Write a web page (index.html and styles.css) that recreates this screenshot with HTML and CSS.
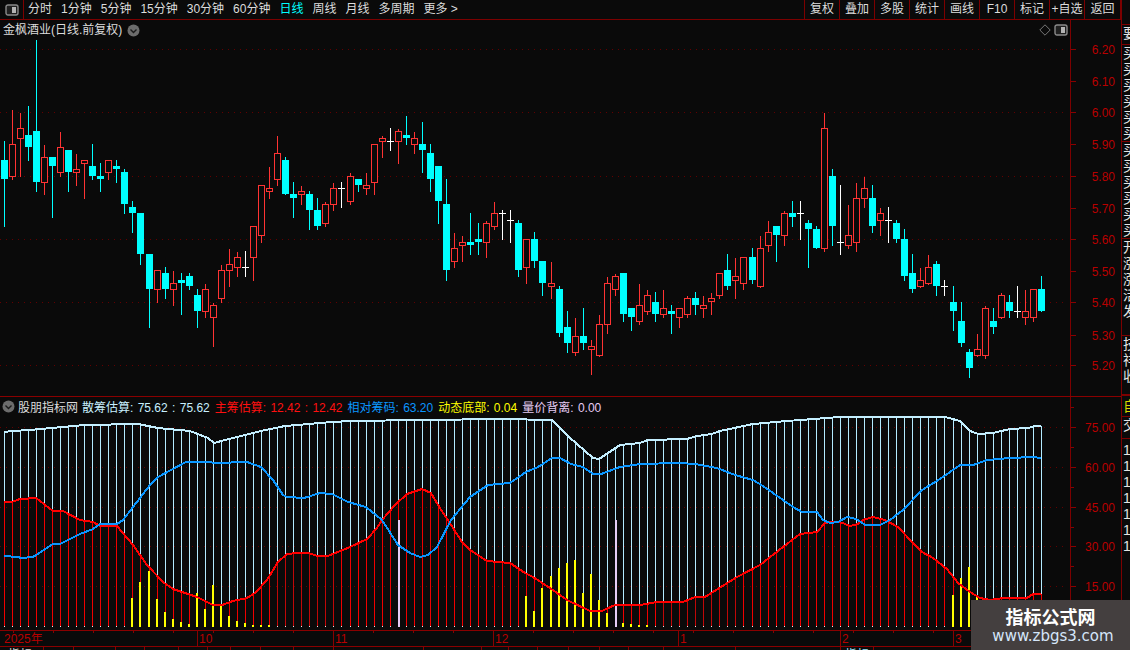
FILE: index.html
```html
<!DOCTYPE html>
<html lang="zh">
<head>
<meta charset="utf-8">
<title>金枫酒业</title>
<link rel="stylesheet" href="styles.css">
</head>
<body>
<div class="app">
  <div class="main">
    <div class="toolbar">
      <div class="tool-icon">
        <svg width="14" height="12" viewBox="0 0 14 12"><rect x="1" y="1" width="12" height="10" rx="2" class="ico-frame"/><rect x="7" y="3" width="4" height="6" class="ico-fill"/></svg>
      </div>
      <nav class="periods">
        <span>分时</span><span>1分钟</span><span>5分钟</span><span>15分钟</span><span>30分钟</span><span>60分钟</span><span class="active">日线</span><span>周线</span><span>月线</span><span>多周期</span><span>更多 &gt;</span>
      </nav>
      <nav class="actions">
        <span>复权</span><span>叠加</span><span>多股</span><span>统计</span><span>画线</span><span>F10</span><span>标记</span><span>+自选</span><span>返回</span>
      </nav>
    </div>

    <section class="pane pane-price">
      <div class="plot-col">
        <div class="title-row">
          <span class="stock">金枫酒业(日线.前复权)</span>
          <svg class="chev" width="13" height="13" viewBox="0 0 13 13"><circle cx="6.5" cy="6.5" r="6" class="chev-bg"/><path d="M3.5 5.5 6.5 8.5 9.5 5.5" class="chev-line"/></svg>
          <span class="title-tools">
            <svg width="12" height="12" viewBox="0 0 12 12"><path d="M6 .8 11.2 6 6 11.2 .8 6Z" class="ico-diamond"/></svg>
            <svg width="14" height="12" viewBox="0 0 14 12"><rect x="1" y="1" width="12" height="10" rx="2" class="ico-frame"/><rect x="7" y="3" width="4" height="6" class="ico-fill"/></svg>
          </span>
        </div>
        <svg id="price" class="plot" width="1070" height="356" viewBox="0 40 1070 356"></svg>
      </div>
      <svg id="price-axis" class="axis" width="50" height="376" viewBox="1071 20 50 376"></svg>
    </section>

    <section class="pane pane-ind">
      <div class="plot-col">
        <div class="legend">
          <svg class="chev" width="13" height="13" viewBox="0 0 13 13"><circle cx="6.5" cy="6.5" r="6" class="chev-bg"/><path d="M3.5 5.5 6.5 8.5 9.5 5.5" class="chev-line"/></svg>
          <span class="l-name">股朋指标网</span>
          <span class="l-san">散筹估算: 75.62 : 75.62</span>
          <span class="l-zhu">主筹估算: 12.42 : 12.42</span>
          <span class="l-xd">相对筹码: 63.20</span>
          <span class="l-dt">动态底部: 0.04</span>
          <span class="l-lj">量价背离: 0.00</span>
        </div>
        <svg id="ind" class="plot" width="1070" height="215" viewBox="0 415 1070 215"></svg>
      </div>
      <svg id="ind-axis" class="axis" width="50" height="233" viewBox="1071 397 50 233"></svg>
    </section>

    <svg id="dates" class="dates" width="1121" height="17" viewBox="0 630 1121 17"></svg>
    <svg id="strip" class="strip" width="1121" height="3" viewBox="0 647 1121 3"></svg>
  </div>

  <aside class="side">
    <div class="cell c-blank"></div>
    <div class="cell c-1"><p>要</p></div>
    <div class="cell c-2"><p>买买买买买买</p></div>
    <div class="cell c-2"><p>买买买买买买</p></div>
    <div class="cell c-2"><p>开涨涨活发</p></div>
    <div class="cell c-3"><p>技祥收</p></div>
    <div class="cell c-4"><p class="yellow">自</p></div>
    <div class="cell c-5"><p>交</p></div>
    <div class="cell c-6"><p>111111111111</p></div>
  </aside>

  <div class="watermark">
    <strong>指标公式网</strong>
    <em>www.zbgs3.com</em>
  </div>
</div>
<script src="chart.js"></script>
</body>
</html>
```
FILE: styles.css
```css
* { box-sizing: border-box; }
html, body { margin: 0; padding: 0; background: #0a0a0a; }
body { font-family: "Liberation Sans", "Noto Sans CJK SC", sans-serif; font-size: 12px; color: #dcdcdc; }

.app { position: relative; width: 1130px; height: 650px; display: flex; overflow: hidden; background: #0a0a0a; }
.main { width: 1121px; display: flex; flex-direction: column; }

.toolbar { height: 20px; display: flex; align-items: stretch; border-bottom: 1px solid #7c0000; flex: none; }
.tool-icon { width: 24px; border-right: 1px solid #7c0000; display: flex; align-items: center; justify-content: center; }
.periods { display: flex; align-items: center; gap: 9px; padding-left: 4px; flex: 1; }
.periods span { line-height: 19px; white-space: nowrap; }
.periods .active { color: #00ffff; }
.actions { display: flex; border-left: 1px solid #7c0000; }
.actions span { width: 35px; border-right: 1px solid #7c0000; text-align: center; line-height: 19px; white-space: nowrap; }
.actions span:last-child { width: 36px; }

.ico-frame { fill: #202020; stroke: #8a8a8a; stroke-width: 1.4; }
.ico-fill { fill: #b4b4b4; }
.ico-diamond { fill: none; stroke: #777; stroke-width: 1; }
.chev-bg { fill: #6c6c6c; }
.chev-line { fill: none; stroke: #1a1a1a; stroke-width: 1.4; }

.pane { display: flex; flex: none; }
.pane-price { height: 376px; }
.pane-ind { height: 234px; border-top: 1px solid #8a0000; }
.plot-col { width: 1070px; display: flex; flex-direction: column; }
.plot { display: block; flex: none; }
.axis { display: block; border-left: 1px solid #7c0000; width: 51px; flex: none; }

.title-row { height: 20px; display: flex; align-items: center; padding-left: 3px; flex: none; }
.stock { font-size: 12px; line-height: 20px; white-space: nowrap; }
.chev { margin-left: 5px; flex: none; }
.title-tools { margin-left: auto; margin-right: 2px; display: flex; gap: 3px; align-items: center; }

.legend { height: 18px; display: flex; align-items: center; padding-left: 2px; white-space: nowrap; word-spacing: 1px; flex: none; }
.legend .chev { margin-left: 0; margin-right: 3px; }
.legend span { margin-right: 5px; }
.legend .l-name { margin-right: 4px; color: #dcdcdc; }
.l-san { color: #c8f0ff; }
.l-zhu { color: #ff1010; }
.l-xd { color: #0a96ff; }
.l-dt { color: #ffff00; }
.l-lj { color: #e6cdf5; }

.dates { display: block; flex: none; }
.strip { display: block; flex: none; }

.side { width: 9px; border-left: 1px solid #7c0000; flex: none; display: flex; flex-direction: column; overflow: hidden; }
.cell { overflow: hidden; border-bottom: 1px solid #7c0000; flex: none; }
.cell p { width: 14px; margin: 0 0 0 1px; font-size: 14px; line-height: 16px; word-break: break-all; color: #e4e4e4; }
.cell p.yellow { color: #d8d800; line-height: 20px; }
.c-blank { height: 25px; }
.c-1 { height: 20px; }
.c-2 { height: 97px; }
.c-3 { height: 60px; border-bottom-width: 2px; }
.c-4 { height: 21px; }
.c-5 { height: 22px; }
.c-6 { border-bottom: 0; flex: 1; padding-top: 3px; }

.watermark { position: absolute; left: 971px; top: 600px; width: 159px; height: 50px; background: #443f3f; display: flex; flex-direction: column; align-items: center; }
.watermark strong { font: 700 18px/22px "Noto Sans CJK SC", sans-serif; color: #fff; margin-top: 5px; }
.watermark em { font: normal 15px/18px "DejaVu Sans", sans-serif; color: #d5e6fa; margin-left: 5px; }

.grid { stroke: #620000; stroke-width: 1; stroke-dasharray: 1 5; }
.tick { stroke: #8a0000; stroke-width: 1; }
.axis-label { fill: #b80000; font: 12px "Liberation Sans", sans-serif; text-anchor: end; }
.date-label { fill: #b80000; font: 12px "Liberation Sans", "Noto Sans CJK SC", sans-serif; }
.date-rule { stroke: #8a0000; stroke-width: 1; }
.strip-text { fill: #dcdcdc; font: 12px "Noto Sans CJK SC", sans-serif; }
.strip-text-c { fill: #9fe8ff; font: 12px "Noto Sans CJK SC", sans-serif; }

.c-cyan { fill: #00ffff; }
.c-white { fill: #ffffff; }
.c-red { fill: #ff3333; }
.c-outline { fill: #0a0a0a; stroke: #ff3333; stroke-width: 1; }
.bar-blue { fill: #b4ebff; }
.bar-red { fill: #f00000; }
.bar-dark { fill: #c00808; }
.bar-pink { fill: #e6cdf5; }
.bar-yellow { fill: #ffff00; }
.bar-foot { fill: #e8e8e8; }
.line { fill: none; stroke-width: 2; stroke-linejoin: round; }
.line-white { stroke: #c4efff; }
.line-red { stroke: #ff0000; }
.line-blue { stroke: #0a96ff; }
```
FILE: chart.js
```js
(function () {
  var NS = 'http://www.w3.org/2000/svg';
  function el(parent, tag, attrs, text) {
    var n = document.createElementNS(NS, tag);
    for (var k in attrs) n.setAttribute(k, attrs[k]);
    if (text) n.textContent = text;
    parent.appendChild(n);
    return n;
  }
  function cx(i) { return Math.floor(4.3 + 8.04 * i); }

  // type, high, top, bottom, low (zoomed units: y = 100 + v / 3)
  var candles = [
    'c 123 180 237 378','r 30 133 230 237','r 40 85 116 228','c 18 105 141 180','c -180 93 246 273',
    'r 136 172 249 282','c 171 171 198 351','r 96 142 219 228','c 150 150 216 273','r 163 208 218 255',
    'r 181 181 191 294','c 132 198 228 237','c 189 228 237 273','r 181 181 219 237','c 180 198 207 246',
    'c 207 216 312 339','c 303 321 339 396','c 339 339 462 492','c 462 462 567 681','r 511 511 569 606',
    'c 501 519 567 594','r 513 550 570 615','c 519 540 549 642','c 519 528 558 567','c 567 585 633 681',
    'r 552 568 635 651','r 609 616 653 738','r 495 511 597 606','r 447 493 513 558','r 456 472 503 528',
    'w 453 501 503 528','r 378 379 473 540','r 256 256 407 426','r 201 265 275 294','r 108 160 239 255',
    'c 171 180 282 282','c 246 282 294 351','r 258 274 285 312','c 273 282 330 387','c 294 330 378 387',
    'r 306 313 371 378','r 249 265 315 330','w 246 264 266 321','r 219 229 305 312','c 237 237 255 273',
    'r 219 256 266 282','r 133 133 248 282','r 108 115 125 171','w 84 123 125 150','r 87 94 125 189',
    'c 48 105 114 132','r 96 115 134 159','c 66 132 150 216','c 132 159 237 273','c 198 198 303 369',
    'c 237 312 510 540','r 399 445 485 501','r 408 427 437 483','c 339 426 435 462','c 369 417 426 462',
    'r 363 370 428 471','r 306 340 380 387','w 330 340 342 417','w 330 360 362 426','c 360 369 510 528',
    'r 418 418 503 549','c 396 417 483 501','c 483 483 549 585','r 486 550 560 594','c 558 567 699 708',
    'c 633 681 729 756','r 654 709 758 765','c 624 708 729 747','r 720 739 749 822','r 645 673 767 767',
    'r 531 550 674 699','r 522 529 569 585','c 519 519 642 663','c 624 624 651 690','r 552 616 665 672',
    'r 570 586 635 642','c 576 606 642 663','r 570 625 644 651','c 615 633 642 699','r 625 625 653 681',
    'r 588 595 644 651','c 576 594 615 642','r 588 616 626 651','r 579 595 607 642','r 519 519 587 594',
    'c 462 510 558 567','r 474 529 542 594','r 472 472 551 567','c 444 471 540 549','r 408 445 560 560',
    'r 363 397 437 453','c 378 378 405 483','r 333 340 407 435','c 303 339 351 378','w 303 339 341 417',
    'c 360 369 387 501','c 378 387 444 444','r 39 85 446 453','c 207 228 378 435','w 255 426 428 462',
    'r 315 406 437 444','r 249 295 428 453','r 231 265 296 321','c 255 294 378 396','r 324 340 362 405',
    'w 321 359 361 426','c 360 369 417 426','c 387 417 528 540','c 462 519 567 576','r 504 541 560 560',
    'r 465 501 552 552','c 483 492 558 585','w 540 558 560 585','c 558 606 633 690','c 606 663 729 738',
    'c 747 756 804 831','r 702 748 767 767','r 618 625 767 774','c 624 663 681 699','r 579 586 653 653',
    'c 585 606 633 651','w 558 633 635 651','r 570 634 653 672','r 567 568 653 663','c 528 567 633 633'
  ];

  var white = [[4,432],[12,431],[30,430],[51,428],[85,425],[138,424],[158,428],[190,431],[208,438],[214,443],[229,439],[261,431],[285,426],[332,422],[350,421],[422,420],[502,419],[552,420],[569,437],[593,458],[599,459],[620,445],[640,443],[648,440],[687,439],[697,436],[712,434],[720,431],[753,424],[787,421],[840,417],[945,417],[960,421],[970,431],[978,434],[993,433],[1010,429],[1028,428],[1035,426],[1041,426]];
  var blue = [[4,556],[17,557],[22,558],[33,557],[53,544],[60,544],[80,534],[93,529],[100,524],[117,524],[123,520],[150,485],[158,477],[186,462],[209,462],[215,463],[247,462],[261,467],[273,480],[283,495],[287,497],[304,498],[320,493],[332,494],[348,502],[366,507],[382,520],[398,545],[410,553],[420,557],[428,555],[437,547],[451,520],[470,497],[488,485],[510,483],[526,472],[538,467],[552,458],[560,458],[571,464],[583,467],[593,474],[601,474],[620,467],[640,464],[678,463],[695,464],[717,468],[735,475],[753,480],[763,486],[783,500],[793,507],[802,512],[817,512],[823,520],[830,523],[838,522],[847,517],[853,518],[858,520],[865,525],[880,525],[890,520],[903,510],[922,490],[940,479],[960,465],[973,465],[987,460],[1010,458],[1033,457],[1041,458]];
  var red = [[4,502],[12,502],[20,499],[36,498],[53,511],[63,511],[80,520],[93,522],[100,526],[117,526],[133,545],[147,565],[163,582],[173,589],[197,597],[213,605],[222,605],[233,601],[247,598],[255,593],[267,580],[278,562],[287,554],[297,553],[308,553],[318,556],[328,556],[350,547],[367,539],[377,528],[382,520],[395,505],[407,494],[422,489],[431,493],[441,510],[448,520],[462,542],[470,550],[487,561],[510,563],[525,573],[533,577],[550,588],[567,600],[590,611],[602,611],[615,605],[640,605],[657,602],[683,602],[695,597],[705,597],[737,577],[760,565],[783,547],[800,534],[817,532],[825,523],[830,522],[840,522],[850,526],[858,524],[863,520],[873,517],[885,520],[898,527],[913,543],[922,552],[933,558],[947,569],[958,583],[970,592],[980,598],[990,600],[1003,598],[1027,598],[1033,594],[1041,594]];

  var yellow = {16:598,17:582,18:571,19:599,20:612,21:619,22:622,23:624,24:593,25:609,26:585,27:605,28:616,29:621,30:623,31:625,32:625,33:625,
    65:596,66:611,67:588,68:576,69:568,70:563,71:560,72:593,73:574,74:600,75:613,77:623,78:624,79:625,80:625,
    118:595,119:578,120:567,121:596};
  var pink = {49:1, 76:1};

  function at(series, x) {
    if (x <= series[0][0]) return series[0][1];
    for (var i = 1; i < series.length; i++) {
      if (x <= series[i][0]) {
        var a = series[i - 1], b = series[i];
        return a[1] + (b[1] - a[1]) * (x - a[0]) / (b[0] - a[0]);
      }
    }
    return series[series.length - 1][1];
  }
  function rect(p, cls, x, y, w, h) {
    el(p, 'rect', { 'class': cls, x: x, y: y, width: w, height: h, 'shape-rendering': 'crispEdges' });
  }
  function hline(p, y) {
    el(p, 'line', { 'class': 'grid', x1: 0, x2: 1066, y1: y + 0.5, y2: y + 0.5, 'shape-rendering': 'crispEdges' });
  }
  function line(p, cls, pts) {
    el(p, 'polyline', { 'class': 'line ' + cls, 'shape-rendering': 'crispEdges',
      points: pts.map(function (q) { return q.join(','); }).join(' ') });
  }
  function axis(id, major, minor) {
    var a = document.getElementById(id);
    minor.forEach(function (y) {
      el(a, 'line', { 'class': 'tick', x1: 1071, x2: 1074, y1: y + 0.5, y2: y + 0.5 });
    });
    major.forEach(function (m) {
      el(a, 'line', { 'class': 'tick', x1: 1071, x2: 1076, y1: m[1] + 0.5, y2: m[1] + 0.5 });
      el(a, 'text', { 'class': 'axis-label', x: 1115, y: m[1] + 5 }, m[0]);
    });
  }

  // price pane
  var price = document.getElementById('price');
  [112, 176, 239, 302, 365].forEach(function (y) { hline(price, y); });
  hline(price, 49);
  candles.forEach(function (s, i) {
    var p = s.split(' '), t = p[0], x = cx(i);
    var Y = function (v) { return Math.round(100 + Number(v) / 3); };
    var hi = Y(p[1]), top = Y(p[2]), bot = Y(p[3]), lo = Y(p[4]);
    if (t === 'w') {
      rect(price, 'c-white', x, hi, 1, lo - hi + 1);
      rect(price, 'c-white', x - 3, top, 7, 1);
    } else if (t === 'c') {
      rect(price, 'c-cyan', x, hi, 1, lo - hi + 1);
      rect(price, 'c-cyan', x - 3, top, 7, Math.max(bot - top, 2));
    } else {
      rect(price, 'c-red', x, hi, 1, lo - hi + 1);
      el(price, 'rect', { 'class': 'c-outline', x: x - 2.5, y: top + 0.5, width: 6, height: Math.max(bot - top - 1, 1), 'shape-rendering': 'crispEdges' });
    }
  });
  axis('price-axis',
    [['6.20',49],['6.10',81],['6.00',112],['5.90',144],['5.80',176],['5.70',208],['5.60',239],['5.50',271],['5.40',302],['5.30',335],['5.20',365]],
    []);

  // indicator pane
  var ind = document.getElementById('ind');
  [427, 467, 507, 546, 586].forEach(function (y) { hline(ind, y); });
  for (var i = 0; i < 130; i++) {
    var x = cx(i), w = Math.round(at(white, x)), r = Math.round(at(red, x));
    var dark = (x > 272 && x < 340) || (x > 660 && x < 740);
    rect(ind, 'bar-blue', x, w, 1, r - w);
    rect(ind, dark ? 'bar-dark' : 'bar-red', x, r, 1, 626 - r);
    rect(ind, 'bar-foot', x, 626, 1, 1);
    if (pink[i]) rect(ind, 'bar-pink', x, 520, 2, 107);
    if (yellow[i]) rect(ind, 'bar-yellow', x - 1, yellow[i], 2, 627 - yellow[i]);
  }
  line(ind, 'line-white', white);
  line(ind, 'line-red', red);
  line(ind, 'line-blue', blue);
  axis('ind-axis',
    [['75.00',427],['60.00',467],['45.00',507],['30.00',546],['15.00',586]],
    [407, 447, 487, 527, 566, 606]);

  // date axis
  var d = document.getElementById('dates');
  el(d, 'line', { 'class': 'date-rule', x1: 0, x2: 1121, y1: 630.5, y2: 630.5 });
  el(d, 'line', { 'class': 'date-rule', x1: 0, x2: 1121, y1: 646.5, y2: 646.5 });
  for (var tx = 13; tx < 1121; tx += 40) {
    el(d, 'line', { 'class': 'date-rule', x1: tx + 0.5, x2: tx + 0.5, y1: 631, y2: 633 });
  }
  [[197,'10'],[333,'11'],[493,'12'],[678,'1'],[840,'2'],[953,'3']].forEach(function (m) {
    el(d, 'line', { 'class': 'date-rule', x1: m[0] + 0.5, x2: m[0] + 0.5, y1: 631, y2: 646 });
    el(d, 'text', { 'class': 'date-label', x: m[0] + 2, y: 643 }, m[1]);
  });
  el(d, 'text', { 'class': 'date-label', x: 4, y: 643 }, '2025年');

  // clipped tab strip under the axis
  var st = document.getElementById('strip');
  [43,73,115,144,178,207,230,260,293,333,423,481,508,537,568,599,628,663,735,840,873].forEach(function (x) {
    el(st, 'line', { 'class': 'date-rule', x1: x + 0.5, x2: x + 0.5, y1: 647, y2: 650 });
  });
  el(st, 'text', { 'class': 'strip-text', x: 8, y: 659 }, '指标');
  el(st, 'text', { 'class': 'strip-text-c', x: 845, y: 659 }, '指标');
})();
```
